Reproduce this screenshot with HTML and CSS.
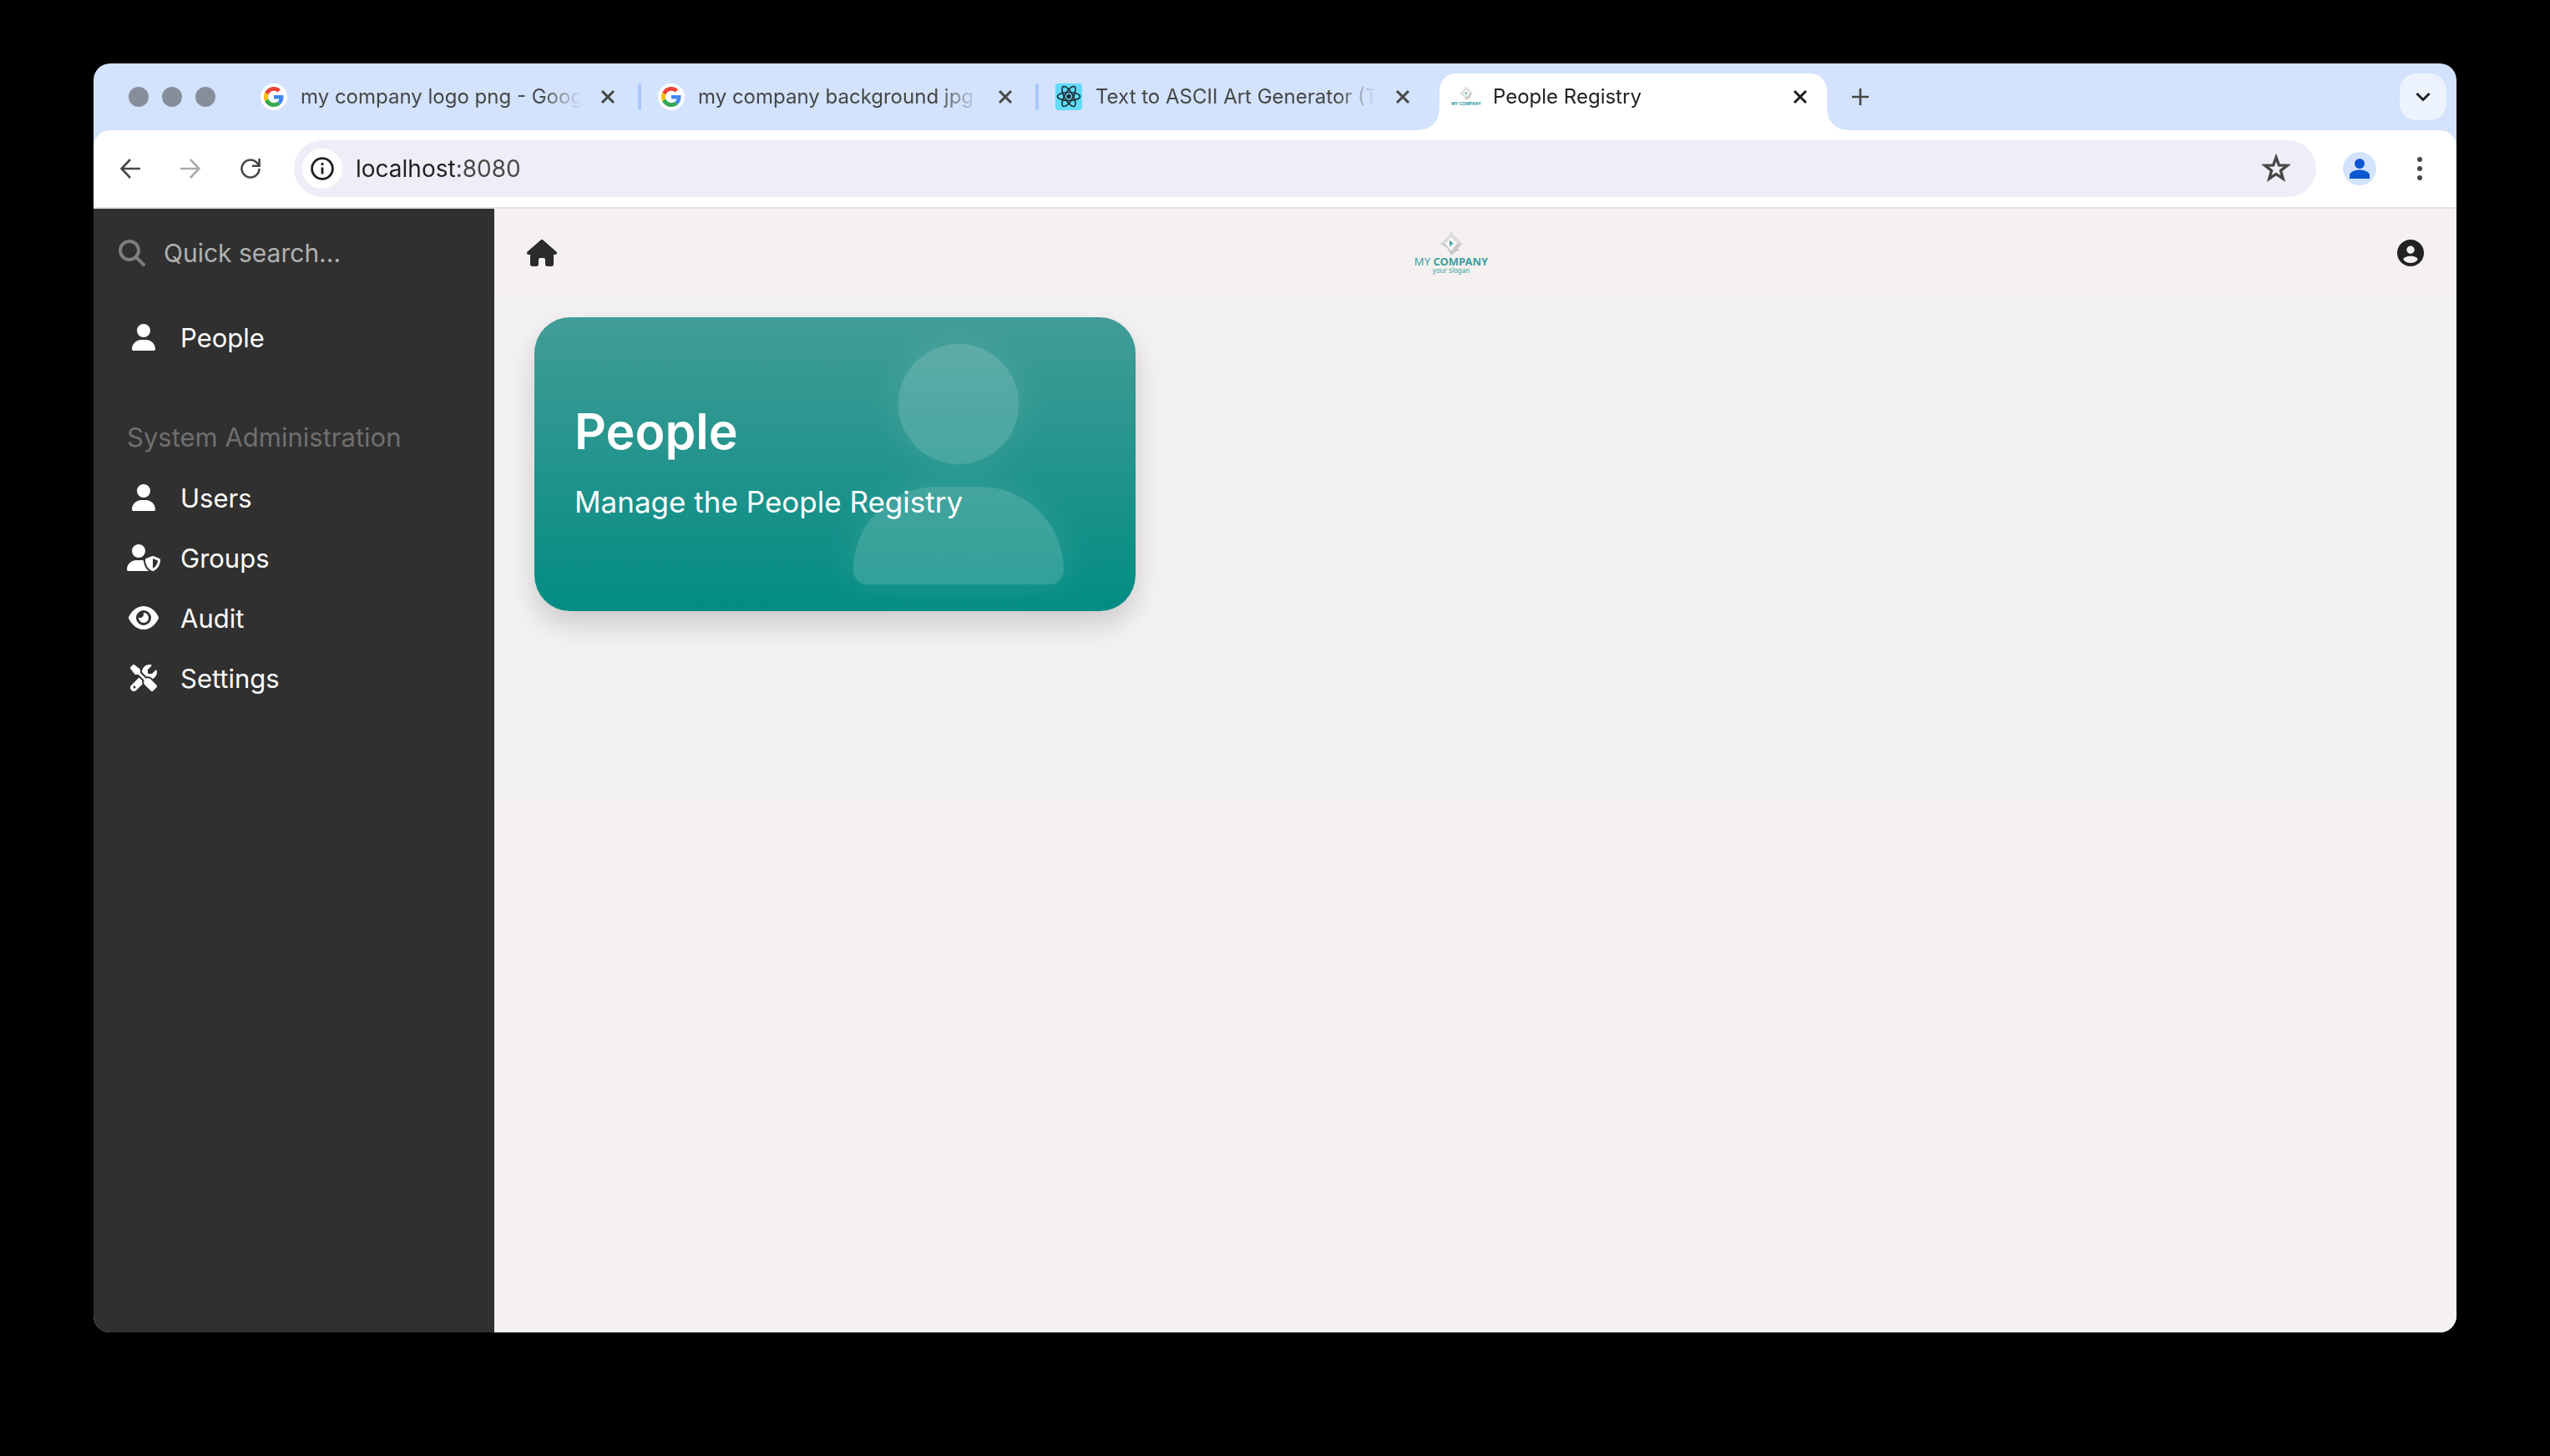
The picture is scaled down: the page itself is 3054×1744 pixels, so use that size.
FILE: index.html
```html
<!DOCTYPE html>
<html lang="en">
<head>
<meta charset="utf-8">
<title>People Registry</title>
<link rel="stylesheet" href="styles.css">
</head>
<body>
<svg class="defs" aria-hidden="true">
  <symbol id="i-google" viewBox="0 0 48 48">
    <path fill="#ea4335" d="M24 9.5c3.54 0 6.71 1.22 9.21 3.6l6.85-6.85C35.9 2.38 30.47 0 24 0 14.62 0 6.51 5.38 2.56 13.22l7.98 6.19C12.43 13.72 17.74 9.5 24 9.5z"/>
    <path fill="#4285f4" d="M46.98 24.55c0-1.57-.15-3.09-.38-4.55H24v9.02h12.94c-.58 2.96-2.26 5.48-4.78 7.18l7.73 6c4.51-4.18 7.09-10.36 7.09-17.65z"/>
    <path fill="#fbbc05" d="M10.53 28.59c-.48-1.45-.76-2.99-.76-4.59s.27-3.14.76-4.59l-7.98-6.19C.92 16.46 0 20.12 0 24c0 3.88.92 7.54 2.56 10.78l7.97-6.19z"/>
    <path fill="#34a853" d="M24 48c6.48 0 11.93-2.13 15.89-5.81l-7.73-6c-2.15 1.45-4.92 2.3-8.16 2.3-6.26 0-11.57-4.22-13.47-9.91l-7.98 6.19C6.51 42.62 14.62 48 24 48z"/>
  </symbol>
  <symbol id="i-close" viewBox="0 0 20 20"><path d="M3 3l14 14M17 3L3 17" fill="none" stroke="currentColor" stroke-width="3"/></symbol>
  <symbol id="i-logo" viewBox="0 0 28 28">
    <path fill="#c9c8c7" fill-rule="evenodd" d="M14 0l13 14-5 6 2 2-4 1-6 5L9 19 1 14 9 7zM14 6l-7 8 7 8 7-8z"/>
    <path fill="#dddcdb" d="M14 0l13 14h-6l-7-8-7 8H1l8-7z"/>
    <path fill="#faf9f8" d="M14 6l7 8-7 8-7-8z"/>
    <path fill="#3aa0a6" d="M12 10l5 4-3 1-1 3-1-3z"/>
  </symbol>
  <symbol id="i-user" viewBox="0 0 448 512"><path fill="currentColor" d="M224 256A128 128 0 1 0 224 0a128 128 0 1 0 0 256zm-45.700 48C79.800 304 0 383.800 0 482.300C0 498.700 13.300 512 29.700 512H418.300c16.400 0 29.700-13.300 29.700-29.700C448 383.800 368.200 304 269.700 304H178.300z"/></symbol>
</svg>
<div class="window">
  <header class="tabstrip">
    <div class="lights"><span></span><span></span><span></span></div>
    <nav class="tabs" aria-label="Tabs">
      <div class="tab">
        <span class="favicon favicon-google"><svg><use href="#i-google"/></svg></span>
        <span class="tab-label">my company logo png - Google Search</span>
        <button class="tab-close" aria-label="Close tab"><svg><use href="#i-close"/></svg></button>
      </div>
      <span class="divider"></span>
      <div class="tab">
        <span class="favicon favicon-google"><svg><use href="#i-google"/></svg></span>
        <span class="tab-label">my company background jpg - Google</span>
        <button class="tab-close" aria-label="Close tab"><svg><use href="#i-close"/></svg></button>
      </div>
      <span class="divider"></span>
      <div class="tab">
        <span class="favicon favicon-react"><svg viewBox="0 0 32 32" fill="none" stroke="#1b2b33" stroke-width="1.600"><ellipse cx="16" cy="15.500" rx="13.500" ry="5"/><ellipse cx="16" cy="15.500" rx="13.500" ry="5" transform="rotate(60 16 15.500)"/><ellipse cx="16" cy="15.500" rx="13.500" ry="5" transform="rotate(120 16 15.500)"/><circle cx="16" cy="15.500" r="2.700" fill="#1b2b33" stroke="none"/></svg></span>
        <span class="tab-label">Text to ASCII Art Generator (TAAG)</span>
        <button class="tab-close" aria-label="Close tab"><svg><use href="#i-close"/></svg></button>
      </div>
      <span class="divider divider-off"></span>
      <div class="tab tab-active">
        <span class="favicon favicon-company"><svg><use href="#i-logo"/></svg><b>MY COMPANY</b></span>
        <span class="tab-label">People Registry</span>
        <button class="tab-close" aria-label="Close tab"><svg><use href="#i-close"/></svg></button>
      </div>
    </nav>
    <button class="new-tab" aria-label="New tab"><svg viewBox="0 0 20 20"><path d="M10 0v20M0 10h20" stroke="currentColor" stroke-width="2.600"/></svg></button>
    <button class="tab-search" aria-label="Search tabs"><svg viewBox="0 0 18 12"><path d="M1.500 2L9 9.500 16.500 2" fill="none" stroke="currentColor" stroke-width="3"/></svg></button>
  </header>

  <div class="toolbar">
    <button class="tool" aria-label="Back"><svg viewBox="0 0 24 24"><path d="M24 12H2M12 1L1.500 12 12 23" fill="none" stroke="currentColor" stroke-width="2.600"/></svg></button>
    <button class="tool tool-off" aria-label="Forward"><svg viewBox="0 0 24 24"><path d="M0 12h22M12 1l10.500 11L12 23" fill="none" stroke="currentColor" stroke-width="2.600"/></svg></button>
    <button class="tool" aria-label="Reload"><svg viewBox="0 0 24 24"><path d="M22.500 12A10.500 10.500 0 1 1 19 4.200L22 7.500M22.600 0v8.700h-8.700" fill="none" stroke="currentColor" stroke-width="2.600"/></svg></button>
    <div class="omnibox">
      <span class="site-info"><svg viewBox="0 0 28 28"><circle cx="14" cy="14" r="12.400" fill="none" stroke="currentColor" stroke-width="2.800"/><path d="M14 12.500v8M14 7v3" stroke="currentColor" stroke-width="2.800"/></svg></span>
      <input class="address" type="text" value="localhost:8080" aria-label="Address">
      <button class="star" aria-label="Bookmark"><svg viewBox="0 0 32 32"><path d="M16 4l3 8.300 8.800.3-6.900 5.500 2.400 8.500L16 21.700l-7.300 4.900 2.400-8.500-6.900-5.500 8.800-.3z" fill="none" stroke="currentColor" stroke-width="3"/></svg></button>
    </div>
    <button class="avatar" aria-label="Profile"><svg viewBox="0 0 40 40"><circle cx="20" cy="14" r="6" fill="currentColor"/><path d="M8 32v-4c0-4 6-6.500 12-6.500S32 24 32 28v4z" fill="currentColor"/></svg></button>
    <button class="tool kebab" aria-label="Menu"><svg viewBox="0 0 8 28"><circle cx="4" cy="3" r="3"/><circle cx="4" cy="14" r="3"/><circle cx="4" cy="25" r="3"/></svg></button>
  </div>

  <div class="app">
    <aside class="sidebar">
      <label class="search">
        <svg viewBox="0 0 512 512"><path fill="currentColor" d="M416 208c0 45.900-14.900 88.300-40 122.700L502.600 457.400c12.500 12.500 12.500 32.800 0 45.300s-32.800 12.500-45.300 0L330.700 376c-34.400 25.200-76.800 40-122.700 40C93.100 416 0 322.900 0 208S93.100 0 208 0S416 93.100 416 208zM208 352a144 144 0 1 0 0-288 144 144 0 1 0 0 288z"/></svg>
        <input type="text" placeholder="Quick search..." aria-label="Quick search">
      </label>
      <nav class="menu">
        <a href="#people"><svg><use href="#i-user"/></svg>People</a>
        <h2>System Administration</h2>
        <a href="#users"><svg><use href="#i-user"/></svg>Users</a>
        <a href="#groups"><svg viewBox="0 0 640 512"><path fill="currentColor" d="M224 256A128 128 0 1 0 224 0a128 128 0 1 0 0 256zm-45.700 48C79.800 304 0 383.800 0 482.300C0 498.700 13.300 512 29.700 512H418.300c1.800 0 3.500-.2 5.300-.5c-76.300-55.100-99.800-141-103.100-200.200c-16.100-4.800-33.100-7.300-50.700-7.300H178.300zm308.800-78.300l-120 48C358 277.400 352 286.200 352 296c0 63.300 25.900 168.800 134.800 214.200c5.900 2.500 12.600 2.500 18.500 0C614.100 464.800 640 359.300 640 296c0-9.800-6-18.600-15.100-22.300l-120-48c-5.700-2.300-12.100-2.300-17.800 0zM591.400 312c-3.900 50.700-27.200 116.700-95.400 149.700V273.800L591.400 312z"/></svg>Groups</a>
        <a href="#audit"><svg viewBox="0 0 576 512"><path fill="currentColor" d="M288 32c-80.800 0-145.500 36.800-192.600 80.600C48.600 156 17.300 208 2.500 243.700c-3.300 7.900-3.300 16.700 0 24.600C17.300 304 48.600 356 95.400 399.400C142.500 443.200 207.200 480 288 480s145.500-36.800 192.600-80.600c46.800-43.500 78.100-95.400 93-131.100c3.300-7.900 3.300-16.700 0-24.600c-14.900-35.700-46.200-87.700-93-131.100C433.500 68.800 368.800 32 288 32zM144 256a144 144 0 1 1 288 0 144 144 0 1 1 -288 0zm144-64c0 35.300-28.700 64-64 64c-7.100 0-13.900-1.200-20.300-3.300c-5.500-1.800-11.900 1.600-11.700 7.400c.3 6.900 1.300 13.800 3.200 20.700c13.700 51.200 66.400 81.600 117.600 67.900s81.600-66.400 67.900-117.600c-11.100-41.500-47.800-69.400-88.600-71.100c-5.800-.2-9.200 6.100-7.400 11.700c2.100 6.400 3.300 13.200 3.300 20.300z"/></svg>Audit</a>
        <a href="#settings"><svg viewBox="0 0 512 512"><path fill="currentColor" d="M78.600 5C69.100-2.400 55.600-1.500 47 7L7 47c-8.500 8.500-9.400 22-2.100 31.600l80 104c4.500 5.900 11.600 9.400 19 9.400h54.100l109 109c-14.700 29-10 65.400 14.300 89.600l112 112c12.500 12.500 32.800 12.500 45.300 0l64-64c12.500-12.500 12.500-32.800 0-45.300l-112-112c-24.200-24.200-60.600-29-89.600-14.300l-109-109V104c0-7.500-3.500-14.500-9.400-19L78.600 5zM19.900 396.100C7.200 408.800 0 426.100 0 444.100C0 481.600 30.400 512 67.900 512c18 0 35.300-7.200 48-19.900L233.700 374.300c-7.800-20.900-9-43.600-3.600-65.100l-61.700-61.700L19.900 396.100zM512 144c0-10.500-1.100-20.700-3.200-30.500c-2.400-11.200-16.100-14.100-24.200-6l-63.900 63.900c-3 3-7.100 4.700-11.300 4.700H352c-8.800 0-16-7.200-16-16V102.600c0-4.200 1.700-8.300 4.700-11.300l63.900-63.900c8.100-8.100 5.200-21.800-6-24.200C388.700 1.100 378.500 0 368 0C288.500 0 224 64.500 224 144l0 .8 85.300 85.300c36-9.100 75.800 .5 104 28.700L429 274.500c49-23 83-72.800 83-130.500zM56 432a24 24 0 1 1 48 0 24 24 0 1 1 -48 0z"/></svg>Settings</a>
      </nav>
    </aside>
    <main class="main">
      <div class="topbar">
        <a class="home" href="#home" aria-label="Home"><svg viewBox="0 0 576 512"><path fill="currentColor" d="M575.800 255.500c0 18-15 32.100-32 32.100h-32l.7 160.200c0 2.700-.2 5.400-.5 8.100V472c0 22.100-17.900 40-40 40H456c-1.100 0-2.200 0-3.300-.1c-1.400 .1-2.800 .1-4.200 .1H416 392c-22.100 0-40-17.900-40-40V448 384c0-17.700-14.300-32-32-32H256c-17.700 0-32 14.300-32 32v64 24c0 22.100-17.900 40-40 40H160 128.100c-1.500 0-3-.1-4.500-.2c-1.200 .1-2.400 .2-3.600 .2H104c-22.100 0-40-17.900-40-40V360c0-.9 0-1.900 .1-2.800V287.600H32c-18 0-32-14-32-32.100c0-9 3-17 10-24L266.400 8c7-7 15-8 22-8s15 2 21 7L564.800 231.500c8 7 12 15 11 24z"/></svg></a>
        <div class="logo">
          <svg><use href="#i-logo"/></svg>
          <span class="logo-name">MY <b>COMPANY</b></span>
          <span class="logo-slogan">your slogan</span>
        </div>
        <button class="account" aria-label="Account"><svg viewBox="0 0 32 32"><path fill="currentColor" fill-rule="evenodd" d="M16 0a16 16 0 1 1 0 32a16 16 0 1 1 0-32zM16 7.500a4.700 4.700 0 1 0 0 9.400a4.700 4.700 0 1 0 0-9.400zM16 19.800c-4.800 0-8.600 1.700-8.600 4.200 2 2.500 5 4 8.600 4s6.600-1.500 8.600-4c0-2.500-3.800-4.200-8.600-4.200z"/></svg></button>
      </div>
      <section class="cards">
        <a class="card" href="#people">
          <svg class="card-icon"><use href="#i-user"/></svg>
          <h1>People</h1>
          <p>Manage the People Registry</p>
        </a>
      </section>
    </main>
  </div>
</div>
</body>
</html>
```

FILE: styles.css
```css
* { box-sizing: border-box; }

body {
  margin: 0;
  min-height: 100vh;
  padding: 76px 112px 148px;
  display: flex;
  background: #000;
  color: #2b2b2b;
  font-family: Inter, "Liberation Sans", sans-serif;
}

.defs { position: absolute; width: 0; height: 0; }

svg { display: block; }

button {
  border: 0;
  padding: 0;
  background: none;
  color: inherit;
  font: inherit;
  display: flex;
  align-items: center;
  justify-content: center;
}

a { color: inherit; text-decoration: none; }

.window {
  flex: 1;
  display: flex;
  flex-direction: column;
  border-radius: 20px;
  overflow: hidden;
  background: #d3e2fd;
}

/* Tab strip */
.tabstrip {
  height: 80px;
  display: flex;
  align-items: center;
  padding-left: 42px;
  padding-right: 12px;
}

.lights { display: flex; gap: 16px; width: 142px; }

.lights span {
  width: 24px;
  height: 24px;
  border-radius: 50%;
  background: #868e99;
}

.tabs { display: flex; align-items: center; align-self: flex-end; height: 68px; }

.tab {
  position: relative;
  width: 464px;
  height: 68px;
  padding: 0 12px 12px 16px;
  display: flex;
  align-items: center;
  color: #444746;
  font-size: 24px;
}

.tab-active { background: #fff; color: #1f1f1f; border-radius: 20px 20px 0 0; }

.tab-active::before,
.tab-active::after {
  content: "";
  position: absolute;
  bottom: 0;
  width: 24px;
  height: 24px;
}

.tab-active::before { right: 100%; background: radial-gradient(circle at 0 0, transparent 23px, #fff 24px); }
.tab-active::after { left: 100%; background: radial-gradient(circle at 100% 0, transparent 23px, #fff 24px); }

.tab-label {
  flex: 1;
  min-width: 0;
  margin: 0 12px 0 16px;
  line-height: 32px;
  white-space: nowrap;
  overflow: hidden;
  mask-image: linear-gradient(to right, #000 calc(100% - 48px), transparent);
}

.tab-close { width: 40px; height: 40px; }
.tab-close svg { width: 20px; height: 20px; }

.favicon {
  width: 32px;
  height: 32px;
  display: flex;
  align-items: center;
  justify-content: center;
}

.favicon-google { background: #fff; border-radius: 50%; }
.favicon-google svg { width: 24px; height: 24px; }
.favicon-react { background: #61dafb; border-radius: 4px; }
.favicon-react svg { width: 32px; height: 32px; }
.favicon-company { flex-direction: column; color: #2f9a9f; font-size: 5px; line-height: 8px; white-space: nowrap; }
.favicon-company svg { width: 16px; height: 16px; }

.divider { width: 4px; height: 32px; margin: 0 4px 12px; border-radius: 2px; background: #a8c7fa; }
.divider-off { background: none; }

.new-tab { width: 56px; height: 56px; margin-left: 12px; color: #444746; }
.new-tab svg { width: 20px; height: 20px; }

.tab-search {
  width: 56px;
  height: 56px;
  margin-left: auto;
  border-radius: 20px;
  background: #ecf3fe;
  color: #1f1f1f;
}
.tab-search svg { width: 18px; height: 12px; }

/* Toolbar */
.toolbar {
  display: flex;
  align-items: center;
  padding: 12px 16px;
  border-bottom: 2px solid #e2e2e0;
  border-radius: 20px 20px 0 0;
  background: #fff;
}

.tool { width: 56px; height: 56px; margin-right: 16px; color: #474747; }
.tool svg { width: 24px; height: 24px; }
.tool-off { color: #ababab; }

.omnibox {
  flex: 1;
  height: 68px;
  margin: 0 32px 0 8px;
  padding: 0 28px 0 10px;
  display: flex;
  align-items: center;
  border-radius: 34px;
  background: #eeeef8;
}

.site-info {
  width: 48px;
  height: 48px;
  display: flex;
  align-items: center;
  justify-content: center;
  border-radius: 50%;
  background: #fff;
  color: #1f1f1f;
}
.site-info svg { width: 28px; height: 28px; }

/* The host is darker than the port */
.address {
  flex: 1;
  margin-left: 16px;
  border: 0;
  padding: 0;
  outline: 0;
  font: 28px/40px Inter, "Liberation Sans", sans-serif;
  color: transparent;
  background: linear-gradient(to right, #1f1f1f 120px, #474747 120px);
  background-clip: text;
}

.star { width: 40px; height: 40px; color: #474747; }
.star svg { width: 36px; height: 36px; }

.avatar { width: 40px; height: 40px; border-radius: 50%; background: #d3e3fd; color: #0b57d0; }
.avatar svg { width: 40px; height: 40px; }

.kebab { margin: 0 0 0 24px; }
.kebab svg { width: 8px; height: 28px; fill: #474747; }

/* Application */
.app { flex: 1; display: flex; }

.sidebar { width: 480px; background: #303030; color: #fff; }

.search {
  height: 106px;
  padding-left: 30px;
  display: flex;
  align-items: center;
  gap: 22px;
}
.search svg { width: 32px; height: 32px; color: #7d7d7d; }
.search input {
  flex: 1;
  min-width: 0;
  border: 0;
  padding: 0;
  outline: 0;
  background: none;
  color: #fff;
  font: 30px/40px Inter, "Liberation Sans", sans-serif;
}
.search input::placeholder { color: #b0b0b0; opacity: 1; }

.menu { padding: 12px 40px; font-size: 31px; }

.menu a {
  height: 72px;
  display: flex;
  align-items: center;
  gap: 24px;
}
.menu a svg { width: 40px; height: 32px; }

.menu h2 {
  margin: 48px 0 0;
  font-size: 31px;
  font-weight: 400;
  line-height: 72px;
  color: #6f6f6f;
  white-space: nowrap;
}

.main { flex: 1; background: #f4f1f0; }

.topbar {
  height: 106px;
  padding: 0 39px;
  display: flex;
  align-items: center;
  justify-content: space-between;
}

.home svg { width: 36px; height: 32px; }

.logo {
  margin-right: 62px;
  display: flex;
  flex-direction: column;
  align-items: center;
  color: #3a9fa4;
}
.logo svg { width: 28px; height: 28px; }
.logo-name { font: 13px/14px "Noto Sans", sans-serif; }
.logo-slogan { font: 8px/8px "Noto Sans", sans-serif; }

.account svg { width: 32px; height: 32px; color: #222; }

.cards {
  display: flex;
  flex-wrap: wrap;
  align-content: flex-start;
  gap: 48px;
  min-height: 600px;
  padding: 24px 48px;
  background: #f3f1f2;
}

.card {
  position: relative;
  width: 720px;
  height: 352px;
  padding: 0 48px 6px;
  display: flex;
  flex-direction: column;
  justify-content: center;
  border-radius: 43px;
  background: linear-gradient(#429c97, #028c83);
  box-shadow: 0 16px 32px rgba(0, 0, 0, .16);
  color: #fff;
}

.card-icon {
  position: absolute;
  top: 32px;
  right: 86px;
  width: 252px;
  height: 288px;
  overflow: visible;
  color: #fff;
  filter: drop-shadow(0 0 20px rgba(255, 255, 255, .6));
  opacity: .17;
}

.card h1 { position: relative; margin: 0; font-size: 59px; font-weight: 600; line-height: 80px; }
.card p { position: relative; margin: 16px 0 0; font-size: 35px; line-height: 56px; }
```
